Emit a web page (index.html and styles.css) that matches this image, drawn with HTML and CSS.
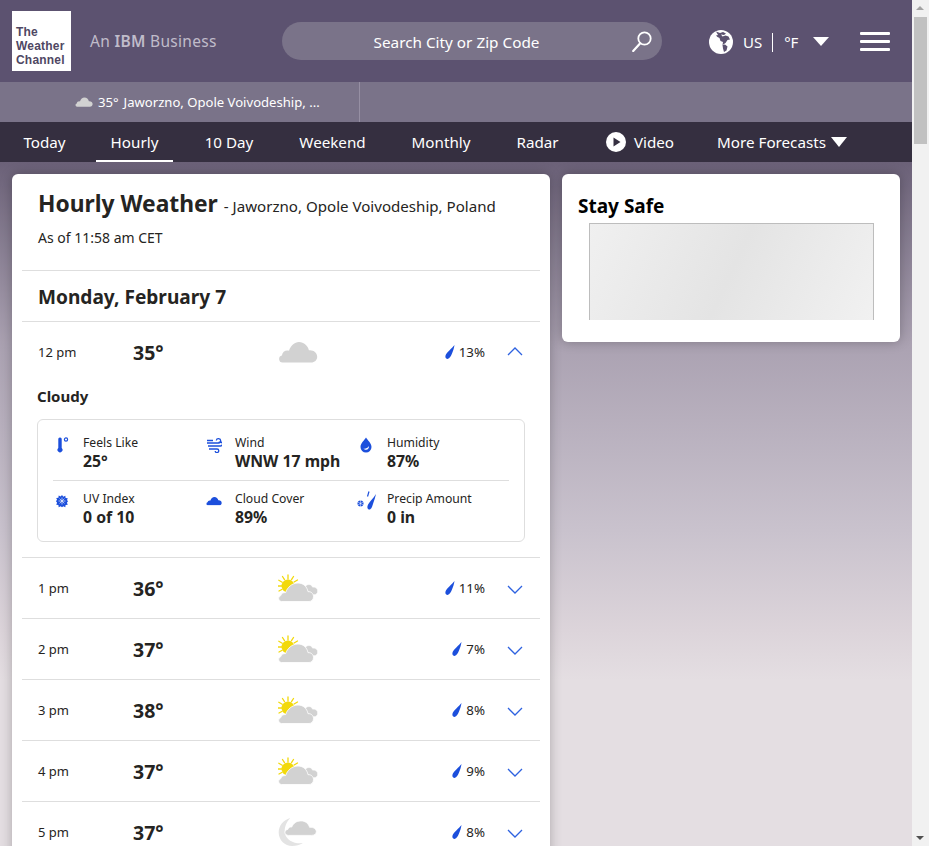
FILE: index.html
```html
<!DOCTYPE html>
<html lang="en">
<head>
<meta charset="utf-8">
<title>Hourly Weather</title>
<link rel="stylesheet" href="styles.css">
</head>
<body>
<svg class="sprite" width="0" height="0" aria-hidden="true">
  <defs>
    <symbol id="cloud" viewBox="0 0 40 22">
      <path d="M4.500 21.500a3.600 3.600 0 0 1-.6-7.100c.4-3.600 3.800-5.700 7.100-4.700C12.700 4.500 16.500 1 21 1c5 0 8.800 3.700 9.900 8.300 4.500-.6 8.300 2.500 8.300 6.400 0 3.400-2.700 5.800-6 5.800z" fill="#d2d2d2"/>
    </symbol>
    <symbol id="cloud-b" viewBox="0 0 40 22">
      <path d="M4.500 21.500a3.600 3.600 0 0 1-.6-7.100c.4-3.600 3.800-5.700 7.100-4.700C12.700 4.500 16.500 1 21 1c5 0 8.800 3.700 9.900 8.300 4.500-.6 8.300 2.500 8.300 6.400 0 3.400-2.700 5.800-6 5.800z" fill="#1c4fdc"/>
    </symbol>
    <symbol id="sun" viewBox="0 0 40 28">
      <g stroke="#f2d90c" stroke-width="1.300" stroke-linecap="round">
        <path d="M10 1v4M4.500 2.500l2 3.200M15.500 2.500l-2 3.200M.8 6.300l3.400 2M19.500 6l-3.400 2M0 12h4M1 17l3.200-1.700"/>
      </g>
      <circle cx="10" cy="12" r="6.500" fill="#f2d90c"/>
      <path d="M27 16a4 4 0 0 1 4-5.500c1.700 0 3 1 3.500 2.600 2.800-.4 5.200 1.300 5.200 3.900 0 2.200-1.500 3.800-3.700 3.800H30z" fill="#d2d2d2" stroke="#fff" stroke-width=".6"/>
      <path d="M3.500 27.500a3 3 0 0 1-.7-5.900c.6-2.200 2.600-3.400 4.800-3C9.200 13.500 14 9 20 9c5.300 0 9 3.500 10 8.700 3-.4 5.500 1.800 5.500 5 0 2.800-2 4.800-4.500 4.800z" fill="#d2d2d2" stroke="#fff" stroke-width=".8"/>
    </symbol>
    <symbol id="moon" viewBox="0 0 40 29">
      <path d="M12 0C4.500 2.500 0 8 0 15c0 8 6.500 14 14 14 4 0 8-1 11-3-9 1-17-3-18.500-10C5.500 11 7.500 4.500 12 0z" fill="#e3e3e3"/>
      <path d="M10 18c-2 0-3.500-1.200-3.500-3 0-1.800 1.300-3 3-3.200.4-1.800 2.200-2.800 4-2.400C15 6 18 3 23 3c4.500 0 8 2.700 9 6.700 3.800-.5 7 1.800 7 4.500 0 2.300-2.200 3.800-5 3.800z" fill="#d2d2d2" stroke="#fff" stroke-width=".8"/>
    </symbol>
    <symbol id="drop" viewBox="0 0 10 14">
      <path d="M9.500 0C9 3 8.200 5.800 6.900 8.800 5.900 11 4.800 13.700 2.500 13.900.600 14 0 11.800.600 10.200 1.500 7.800 6.800 3.300 9.500 0z" fill="#1c4fdc"/>
    </symbol>
    <symbol id="chev" viewBox="0 0 16 9">
      <path d="M1 1l7 7 7-7" fill="none" stroke="#2e62e0" stroke-width="1.300"/>
    </symbol>
  </defs>
</svg>

<div class="window">
  <div class="page">
    <header class="top">
      <div class="logo"><span>The</span><span>Weather</span><span>Channel</span></div>
      <div class="ibm">An <b>IBM</b> Business</div>
      <div class="search">
        <span class="search-text">Search City or Zip Code</span>
        <svg class="search-icon" viewBox="0 0 20 21"><circle cx="12.500" cy="7.500" r="6.200" fill="none" stroke="#fff" stroke-width="1.800"/><path d="M8 12.500L1.200 20" stroke="#fff" stroke-width="2.200" stroke-linecap="round"/></svg>
      </div>
      <svg class="globe" viewBox="0 0 24 24"><circle cx="12" cy="12" r="12" fill="#fff"/><path d="M7 1.500l4 1.500 3-1 3 1.500-2 1.500-3-.5 1.500 2 3-1 3 1 1.500 3-2.500.5-2 3-3 2 .5-3-2.500-1-1-3-2-1-1.500-1.500L9 5zM13.500 15l2.500-.5 2.500 2-1 4-2.500 1.500-1-3.500z" fill="#5c5270"/></svg>
      <span class="unit">US</span>
      <span class="unit-sep"></span>
      <span class="unit">°F</span>
      <span class="tri tri-top"></span>
      <div class="burger"><i></i><i></i><i></i></div>
    </header>
    <div class="recent">
      <div class="recent-cell">
        <svg class="recent-cloud" viewBox="0 0 40 22"><use href="#cloud"/></svg>
        <span>35°</span>
        <span>Jaworzno, Opole Voivodeship, ...</span>
      </div>
    </div>
    <nav class="nav">
      <a>Today</a>
      <a class="on">Hourly</a>
      <a>10 Day</a>
      <a>Weekend</a>
      <a>Monthly</a>
      <a>Radar</a>
      <a><svg class="play" viewBox="0 0 20 20"><circle cx="10" cy="10" r="10" fill="#fff"/><path d="M7.500 5.500l7 4.500-7 4.500z" fill="#352f40"/></svg>Video</a>
      <a>More Forecasts<span class="tri tri-nav"></span></a>
    </nav>

    <main class="content">
      <section class="card hourly">
        <div class="head">
          <div class="title"><h1>Hourly Weather</h1><span class="loc">- Jaworzno, Opole Voivodeship, Poland</span></div>
          <p class="asof">As of 11:58 am CET</p>
        </div>
        <h2 class="day">Monday, February 7</h2>

        <div class="row">
          <span class="time">12 pm</span><span class="temp">35°</span>
          <svg class="wx wx-cloud"><use href="#cloud"/></svg>
          <span class="precip"><svg class="drop"><use href="#drop"/></svg>13%</span>
          <svg class="chev up"><use href="#chev"/></svg>
        </div>
        <div class="detail">
          <h3>Cloudy</h3>
          <div class="box">
            <div class="stat">
              <svg class="si" viewBox="0 0 16 16"><path d="M6 0.500a1.600 1.600 0 0 1 1.700 1.600V11a2.500 2.500 0 1 1-3.400 0V2.100A1.600 1.600 0 0 1 6 0.500z" fill="#1c4fdc"/><circle cx="12" cy="2.500" r="1.600" fill="none" stroke="#1c4fdc" stroke-width="1.200"/></svg>
              <div><span>Feels Like</span><b>25°</b></div>
            </div>
            <div class="stat">
              <svg class="si" viewBox="-1 0 16 16"><path d="M0 6h11.500a2.200 2.200 0 1 0-2.200-2.500M1 9h12.500a2 2 0 1 0-2-2.200M2 12h8a1.800 1.800 0 1 1-1.800 2M0 3.500h6" fill="none" stroke="#1c4fdc" stroke-width="1.300"/></svg>
              <div><span>Wind</span><b>WNW 17 mph</b></div>
            </div>
            <div class="stat">
              <svg class="si" viewBox="0 0 16 16"><path d="M8 .5c1.500 2.800 5.500 5.500 5.500 9.500a5.500 5.500 0 0 1-11 0C2.500 6 6.500 3.300 8 .5z" fill="#1c4fdc"/><path d="M5 11.500c2 .5 4.500 0 6-2.500 .3 2.500-2 5.500-6 2.500z" fill="#fff"/></svg>
              <div><span>Humidity</span><b>87%</b></div>
            </div>
            <div class="stat">
              <svg class="si si-uv" viewBox="0 0 16 16"><path d="M8 1l1.500 2 2.300-1 .3 2.500 2.500.3-1 2.300L15 8l-1.400 1.900 1 2.300-2.500.3-.3 2.500-2.300-1L8 15l-1.500-1-2.300 1-.3-2.500-2.500-.3 1-2.300L1 8l1.400-1.100-1-2.300 2.500-.3.3-2.500 2.300 1z" fill="#1c4fdc"/><path d="M8 4v8M4 8h8M5.200 5.200l5.600 5.600M10.800 5.200l-5.600 5.600" stroke="#fff" stroke-width=".7"/></svg>
              <div><span>UV Index</span><b>0 of 10</b></div>
            </div>
            <div class="stat">
              <svg class="si si-cloud" viewBox="0 0 40 22"><use href="#cloud-b"/></svg>
              <div><span>Cloud Cover</span><b>89%</b></div>
            </div>
            <div class="stat">
              <svg class="si si-wide" viewBox="0 0 20 20"><path d="M19 3c-.7 3-1.500 6-2.700 9-.8 2.600-1.800 6.500-3.900 6.500-1.900 0-2.400-2-1.800-3.800C11.500 12 16.500 7 19 3z" fill="#1c4fdc"/><path d="M12 .5L10.500 5.500" stroke="#1c4fdc" stroke-width="1.200" fill="none"/><circle cx="3.500" cy="12.500" r="3" fill="#1c4fdc"/><path d="M3.500 9v7M.5 10.800l6 3.400M6.500 10.800l-6 3.400" stroke="#fff" stroke-width=".5"/></svg>
              <div><span>Precip Amount</span><b>0 in</b></div>
            </div>
          </div>
        </div>

        <div class="row">
          <span class="time">1 pm</span><span class="temp">36°</span>
          <svg class="wx"><use href="#sun"/></svg>
          <span class="precip"><svg class="drop"><use href="#drop"/></svg>11%</span>
          <svg class="chev"><use href="#chev"/></svg>
        </div>
        <div class="row">
          <span class="time">2 pm</span><span class="temp">37°</span>
          <svg class="wx"><use href="#sun"/></svg>
          <span class="precip"><svg class="drop"><use href="#drop"/></svg>7%</span>
          <svg class="chev"><use href="#chev"/></svg>
        </div>
        <div class="row">
          <span class="time">3 pm</span><span class="temp">38°</span>
          <svg class="wx"><use href="#sun"/></svg>
          <span class="precip"><svg class="drop"><use href="#drop"/></svg>8%</span>
          <svg class="chev"><use href="#chev"/></svg>
        </div>
        <div class="row">
          <span class="time">4 pm</span><span class="temp">37°</span>
          <svg class="wx"><use href="#sun"/></svg>
          <span class="precip"><svg class="drop"><use href="#drop"/></svg>9%</span>
          <svg class="chev"><use href="#chev"/></svg>
        </div>
        <div class="row">
          <span class="time">5 pm</span><span class="temp">37°</span>
          <svg class="wx"><use href="#moon"/></svg>
          <span class="precip"><svg class="drop"><use href="#drop"/></svg>8%</span>
          <svg class="chev"><use href="#chev"/></svg>
        </div>
      </section>

      <aside class="card safe">
        <h2>Stay Safe</h2>
        <div class="ad"></div>
      </aside>
    </main>
  </div>
  <div class="scrollbar">
    <span class="arrow arrow-up"></span>
    <span class="thumb"></span>
    <span class="arrow arrow-down"></span>
  </div>
</div>
</body>
</html>
```
FILE: styles.css
```css
* { box-sizing: border-box; }
html, body { margin: 0; height: 100%; overflow: hidden; }
body { font-family: "Noto Sans", "Open Sans", sans-serif; color: #252422; }
.sprite { position: absolute; }
.window { display: flex; height: 846px; width: 929px; }
.page {
  width: 912px; height: 846px; overflow: hidden; flex: none;
  background: linear-gradient(180deg, #6b6178 162px, #aba2b2 345px, #c9c2cd 530px, #dcd4da 630px, #e4dee2 680px, #e4dee2 100%);
}

/* top bar */
.top { height: 82px; background: #5c5270; display: flex; align-items: center; padding-left: 12px; color: #fff; }
.logo {
  width: 59px; height: 60px; background: #fff; color: #4f4763; font-family: "Liberation Sans", sans-serif;
  font-weight: 700; font-size: 12px; line-height: 14px; padding: 14px 0 0 4px;
  display: flex; flex-direction: column; letter-spacing: .2px; margin-top: -1px;
}
.ibm { margin-left: 19px; width: 192px; font-size: 15.500px; color: #c0bcca; letter-spacing: .3px; }
.ibm b { font-weight: 600; }
.search {
  width: 380px; height: 38px; border-radius: 19px; background: #7a7389; display: flex; align-items: center;
  justify-content: center; padding: 1px 31px 0 0; position: relative; font-size: 15.300px;
}
.search-icon { width: 20px; height: 21px; position: absolute; left: 350px; top: 9px; }
.globe { width: 24px; height: 24px; margin-left: 47px; margin-top: 2px; }
.unit { font-size: 15px; margin-top: 2px; }
.globe + .unit { margin-left: 10px; }
.unit-sep { width: 1px; height: 19px; background: #fff; margin: 2px 11px 0 10px; }
.tri { display: inline-block; width: 0; height: 0; border-style: solid; border-color: #fff transparent transparent; }
.tri-top { border-width: 9px 8.500px 0; margin-left: 15px; }
.burger { width: 30px; margin-left: 31px; display: flex; flex-direction: column; gap: 5px; margin-top: 1px; }
.burger i { display: block; height: 3px; background: #fff; border-radius: 1px; }

/* recent locations */
.recent { height: 40px; background: #7a7389; color: #fff; }
.recent-cell { width: 360px; height: 40px; border-right: 1px solid #968fa3; display: flex; align-items: center; padding-left: 75px; font-size: 13.100px; gap: 5px; white-space: nowrap; }
.recent-cloud { width: 18px; height: 10px; }

/* nav */
.nav {
  height: 40px; background: #352f40; display: grid; gap: 15px; padding-left: 8px;
  grid-template-columns: 73px 77px 82px 95px 92px 71px 104px 150px;
}
.nav a { color: #fff; font-size: 15.200px; display: flex; align-items: center; justify-content: center; white-space: nowrap; }
.nav .on { border-bottom: 2px solid #fff; padding-top: 2px; }
.play { width: 20px; height: 20px; margin-right: 8px; }
.tri-nav { border-width: 10px 8px 0; margin-left: 5px; }

/* content */
.content { display: flex; align-items: flex-start; gap: 12px; padding: 12px 12px 0; }
.card { background: #fff; border-radius: 6px; box-shadow: 0 0 12px rgba(0, 0, 0, .25); }
.hourly { width: 538px; flex: none; padding: 0 10px; }
.head { height: 97px; padding: 13px 0 0 16px; border-bottom: 1px solid #dedede; }
.title { display: flex; align-items: baseline; gap: 6px; }
h1 { margin: 0; font-size: 22.800px; line-height: 33px; font-weight: 700; }
.loc { font-size: 15.100px; }
.asof { margin: 8px 0 0; font-size: 14px; line-height: 20px; }
.day { margin: 0; height: 51px; padding-left: 16px; font-size: 19.100px; line-height: 53px; font-weight: 700; border-bottom: 1px solid #dedede; }
.row {
  height: 61px; display: grid; align-items: center; padding-left: 16px;
  grid-template-columns: 95px 145px 40px 167px 22px 16px;
  border-bottom: 1px solid #dedede;
}
.row > * { grid-row: 1; }
.time { font-size: 13px; }
.temp { font-size: 19.500px; font-weight: 700; margin-top: 1px; }
.wx { width: 40px; height: 28px; }
.wx-cloud { height: 22px; }
.precip { display: flex; align-items: center; justify-content: flex-end; font-size: 13.300px; gap: 4px; }
.drop { width: 10px; height: 14px; }
.chev { width: 16px; height: 9px; grid-column: 6; margin-top: 2px; }
.up { transform: scaleY(-1); margin-top: -2px; }
.row:has(+ .detail) { border-bottom: 0; height: 60px; }
.detail { padding: 4px 15px 15px; border-bottom: 1px solid #dedede; }
.detail h3 { margin: 0 0 12px; font-size: 15px; line-height: 21px; font-weight: 700; }
.box {
  width: 488px; height: 123px; border: 1px solid #dedede; border-radius: 6px; padding: 0 15px;
  display: grid; grid-template-columns: 152px 152px 1fr; grid-template-rows: 61px 61px; position: relative;
}
.box::after { content: ""; position: absolute; left: 15px; right: 15px; top: 60px; height: 1px; background: #dedede; }
.stat { display: flex; align-items: flex-start; padding-top: 14px; }
.stat:nth-child(n+4) { padding-top: 9px; }
.si { width: 16px; height: 16px; margin: 3px 13px 0 1px; flex: none; }
.si-uv { width: 14px; height: 14px; margin: 4px 14px 0 2px; }
.si-cloud { height: 10px; margin-top: 6px; }
.si-wide { width: 20px; height: 20px; margin: 1px 10px 0 0; }
.stat div { display: flex; flex-direction: column; }
.stat span { font-size: 12.200px; line-height: 18px; }
.stat b { font-size: 15.800px; line-height: 18px; font-weight: 700; }

/* aside */
.safe { width: 338px; height: 168px; padding: 20px 16px 0; }
.safe h2 { margin: 0; font-size: 19px; line-height: 25px; color: #000; font-weight: 700; }
.ad {
  width: 285px; height: 97px; margin: 4px 0 0 11px; border: 1px solid #bdbdbd; border-bottom: 0;
  background: linear-gradient(115deg, #f0f0f0 0%, #e4e4e4 50%, #f1f1f1 100%);
}

/* scrollbar */
.scrollbar { width: 17px; height: 846px; background: #f1f1f1; position: relative; flex: none; }
.thumb { position: absolute; left: 2px; top: 17px; width: 13px; height: 127px; background: #c1c1c1; }
.arrow { position: absolute; left: 4px; width: 0; height: 0; border-style: solid; border-color: transparent; }
.arrow-up { top: 6px; border-width: 0 4px 4px; border-bottom-color: #a3a3a3; }
.arrow-down { bottom: 6px; border-width: 4px 4px 0; border-top-color: #505050; }
```
